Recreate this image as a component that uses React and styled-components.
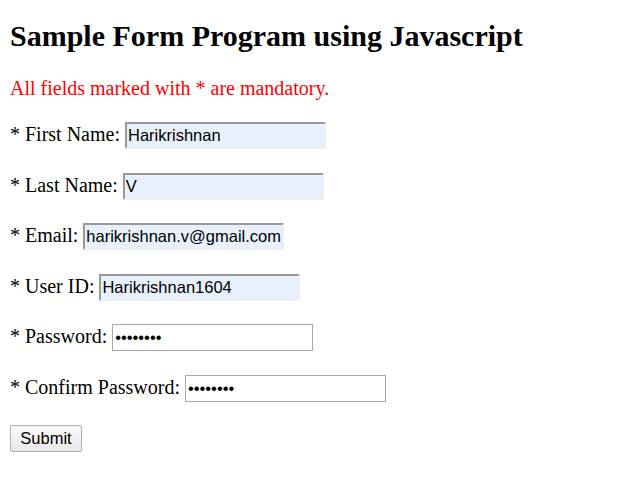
import React from 'react';
import styled, { createGlobalStyle } from 'styled-components';

const GlobalStyle = createGlobalStyle`
  body {
    margin: 10px;
    font-family: "Liberation Serif", "Times New Roman", serif;
    font-size: 20px;
    color: #000;
    background: #fff;
  }
`

const Title = styled.h2`
  font-size: 30px;
  font-weight: bold;
  margin: 9px 0 24px;
`

const Notice = styled.p`
  color: red;
  margin: 0 0 11px;
`

const Row = styled.p`
  margin: 19px 0;
  height: 31.5px;
  line-height: 31.5px;
`

const Field = styled.input`
  box-sizing: border-box;
  width: 201px;
  height: 27px;
  padding: 1px 0 1px 2px;
  font-family: "Liberation Sans", Arial, sans-serif;
  font-size: 16.5px;
  color: #000;
  vertical-align: baseline;
  outline: none;
  background: ${props => props.filled ? '#e8f0fe' : '#fff'};
  border: ${props => props.filled ? '2px solid' : '1px solid #a9a9a9'};
  ${props => props.filled && `
    border-color: #999 #eee #eee #999;
    padding: 1px 0 1px 1px;
  `}
`

const SubmitButton = styled.button`
  box-sizing: border-box;
  width: 72px;
  height: 27px;
  padding: 0 6px;
  font-family: "Liberation Sans", Arial, sans-serif;
  font-size: 16.5px;
  color: #000;
  background: linear-gradient(#fafafa, #e8e8e8);
  border: 1px solid #adadad;
  border-radius: 2px;
`

const fields = [
  { label: 'First Name', type: 'text', value: 'Harikrishnan', filled: true },
  { label: 'Last Name', type: 'text', value: 'V', filled: true },
  { label: 'Email', type: 'text', value: 'harikrishnan.v@gmail.com', filled: true },
  { label: 'User ID', type: 'text', value: 'Harikrishnan1604', filled: true },
  { label: 'Password', type: 'password', value: 'password', filled: false },
  { label: 'Confirm Password', type: 'password', value: 'password', filled: false },
];

export default function App() {
  return (
    <>
      <GlobalStyle />
      <Title>Sample Form Program using Javascript</Title>
      <Notice>All fields marked with * are mandatory.</Notice>
      <form onSubmit={e => e.preventDefault()}>
        {fields.map(f => (
          <Row key={f.label}>
            * {f.label}: <Field type={f.type} defaultValue={f.value} filled={f.filled ? 1 : 0} />
          </Row>
        ))}
        <Row>
          <SubmitButton type="submit">Submit</SubmitButton>
        </Row>
      </form>
    </>
  );
}
